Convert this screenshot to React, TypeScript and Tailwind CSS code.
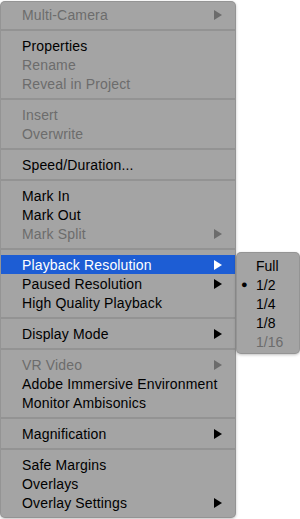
import React from "react";

type Item = { label: string; disabled?: boolean; sub?: boolean; active?: boolean };
type Group = Item[];

const groups: Group[] = [
  [{ label: "Multi-Camera", disabled: true, sub: true }],
  [
    { label: "Properties" },
    { label: "Rename", disabled: true },
    { label: "Reveal in Project", disabled: true },
  ],
  [
    { label: "Insert", disabled: true },
    { label: "Overwrite", disabled: true },
  ],
  [{ label: "Speed/Duration..." }],
  [
    { label: "Mark In" },
    { label: "Mark Out" },
    { label: "Mark Split", disabled: true, sub: true },
  ],
  [
    { label: "Playback Resolution", sub: true, active: true },
    { label: "Paused Resolution", sub: true },
    { label: "High Quality Playback" },
  ],
  [{ label: "Display Mode", sub: true }],
  [
    { label: "VR Video", disabled: true, sub: true },
    { label: "Adobe Immersive Environment" },
    { label: "Monitor Ambisonics" },
  ],
  [{ label: "Magnification", sub: true }],
  [
    { label: "Safe Margins" },
    { label: "Overlays" },
    { label: "Overlay Settings", sub: true },
  ],
];

const resolutions = [
  { label: "Full" },
  { label: "1/2", checked: true },
  { label: "1/4" },
  { label: "1/8" },
  { label: "1/16", disabled: true },
];

function Arrow({ color }: { color: string }) {
  return (
    <svg width="8" height="10" viewBox="0 0 8 10" className="shrink-0">
      <path d="M0 0L8 5L0 10Z" fill={color} />
    </svg>
  );
}

function Row({ item }: { item: Item }) {
  const text = item.active ? "text-white" : item.disabled ? "text-[#6c6c6c]" : "text-black";
  const arrow = item.active ? "#ffffff" : item.disabled ? "#6c6c6c" : "#000000";
  return (
    <div
      className={`flex items-center h-[19px] pl-[21px] pr-[13px] ${text} ${
        item.active ? "bg-[#1d5dd4]" : ""
      }`}
    >
      <span className="flex-1 whitespace-nowrap pt-px tracking-[0.15px]">{item.label}</span>
      {item.sub && <Arrow color={arrow} />}
    </div>
  );
}

export default function App() {
  return (
    <div className="relative w-[300px] h-[519px] bg-white overflow-hidden font-['Liberation_Sans',Arial,sans-serif] text-[14px] leading-none select-none">
      <div className="mt-px w-[236px] h-[517px] bg-[#a4a4a4] rounded-[5px] border border-[#8a8a8a]/60 pt-[3px] pb-1 shadow-[0_1px_3px_rgba(0,0,0,0.25)]">
        {groups.map((g, i) => (
          <div key={i}>
            {i > 0 && (
              <div className="h-[12px] flex items-center">
                <div className="w-full h-[2px] bg-[#939393]" />
              </div>
            )}
            {g.map((item) => (
              <Row key={item.label} item={item} />
            ))}
          </div>
        ))}
      </div>

      {/* Playback Resolution submenu */}
      <div className="absolute left-[236px] top-[252px] w-[64px] h-[102px] bg-[#a4a4a4] rounded-[5px] border border-[#8a8a8a]/60 pt-[3px] shadow-[0_1px_3px_rgba(0,0,0,0.25)]">
        {resolutions.map((r) => (
          <div
            key={r.label}
            className={`flex items-center h-[19px] ${r.disabled ? "text-[#6c6c6c]" : "text-black"}`}
          >
            <span className="w-[19px] pl-[4px] text-[11px]">{r.checked ? "●" : ""}</span>
            <span className="pt-px">{r.label}</span>
          </div>
        ))}
      </div>
    </div>
  );
}
